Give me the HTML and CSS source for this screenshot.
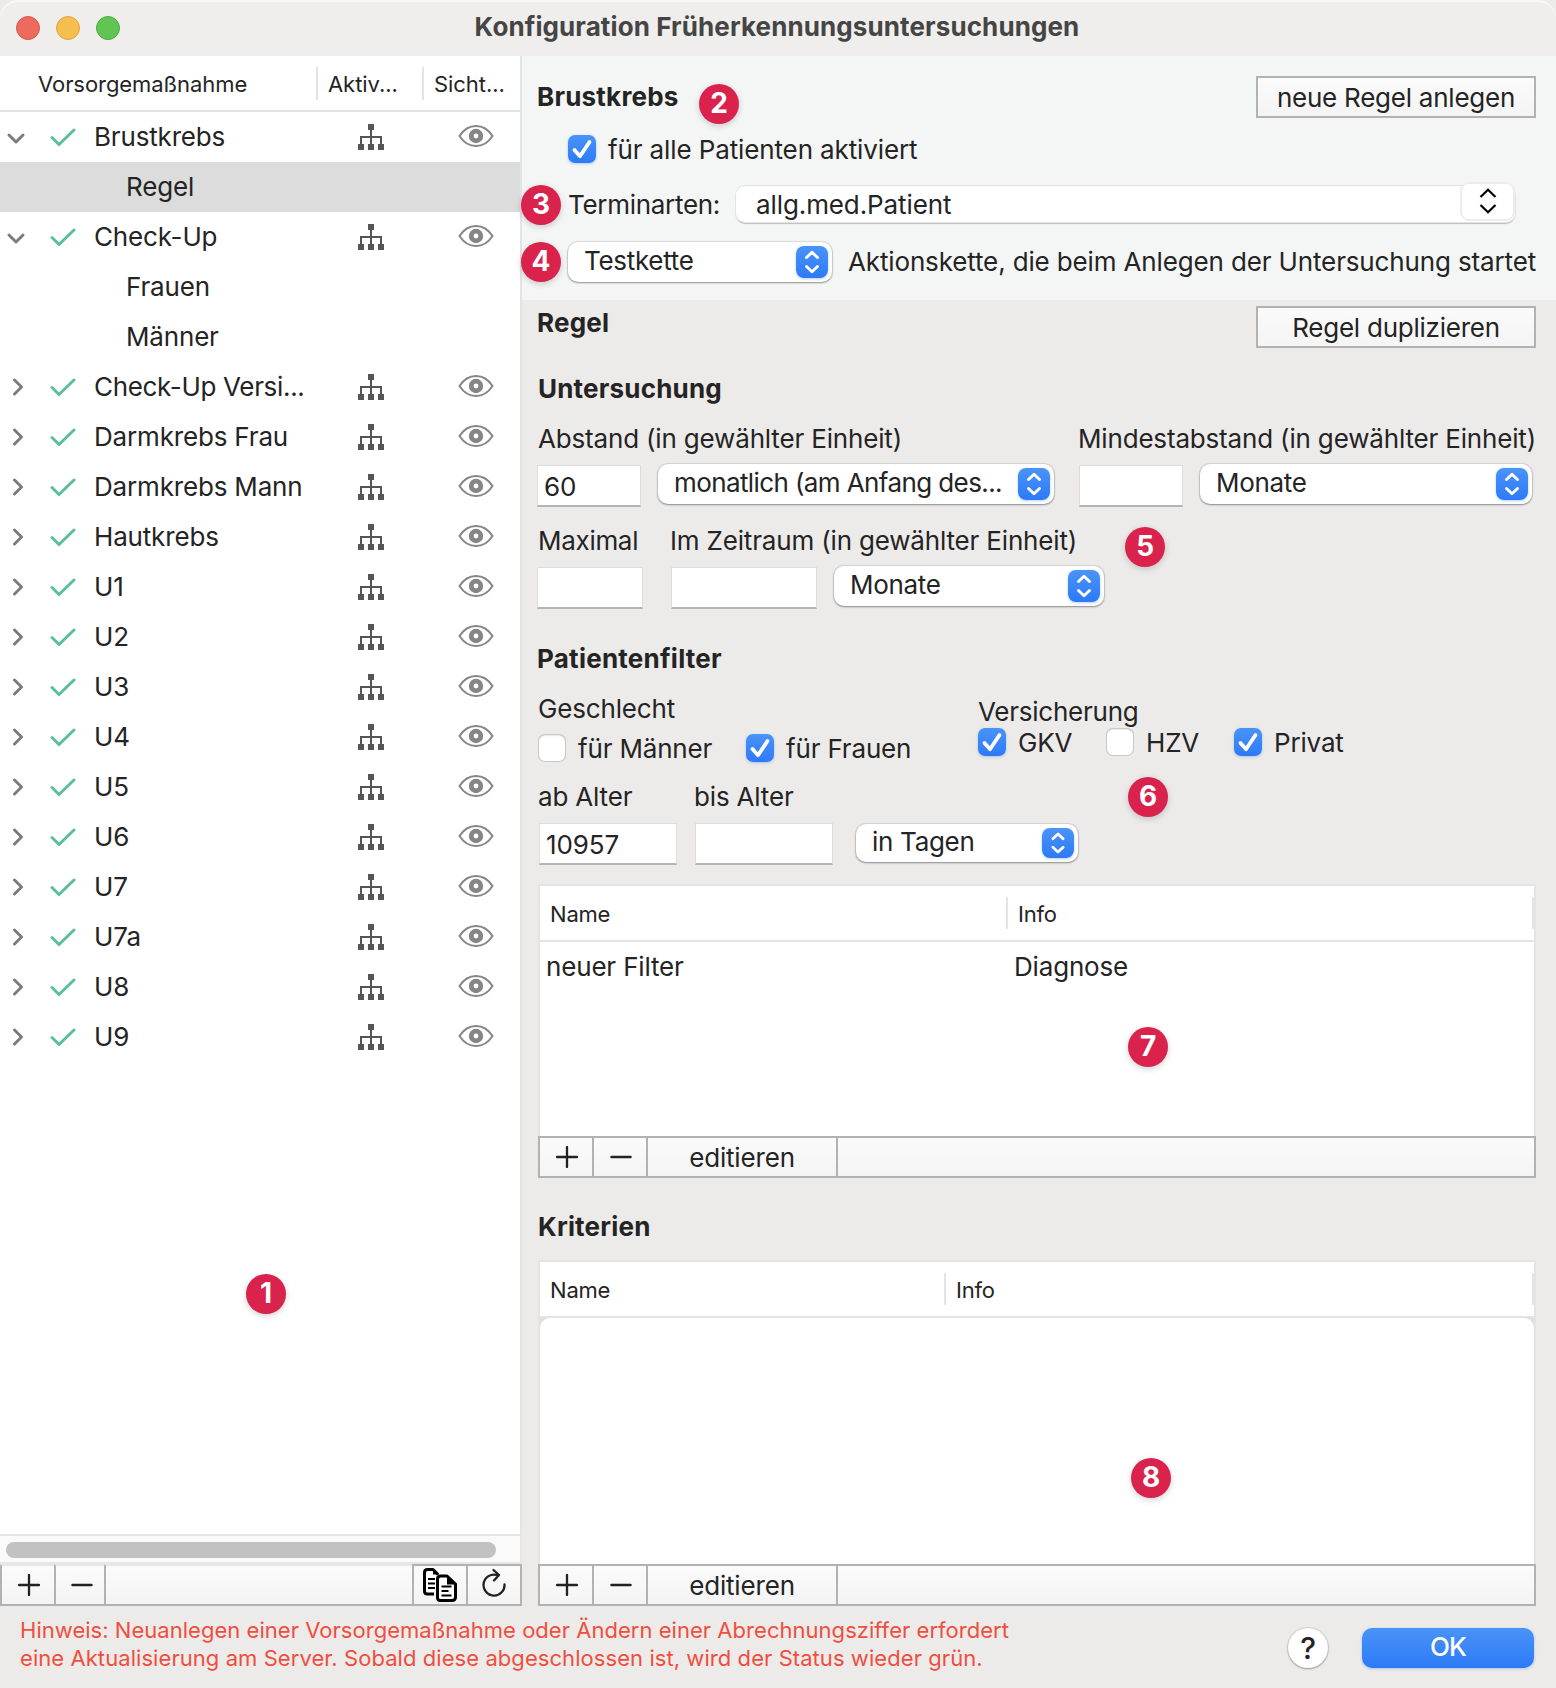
FILE: index.html
```
<!DOCTYPE html>
<html lang="de">
<head>
<meta charset="utf-8">
<title>Konfiguration Früherkennungsuntersuchungen</title>
<link rel="stylesheet" href="styles.css">
</head>
<body>
<svg class="defs" width="0" height="0" aria-hidden="true">
  <symbol id="down" viewBox="0 0 18 12"><path d="M2 2l7 7 7-7" fill="none" stroke="#7b7b7b" stroke-width="2.9" stroke-linecap="round" stroke-linejoin="round"/></symbol>
  <symbol id="right" viewBox="0 0 12 18"><path d="M2.500 2l7 7-7 7" fill="none" stroke="#7b7b7b" stroke-width="2.9" stroke-linecap="round" stroke-linejoin="round"/></symbol>
  <symbol id="tick" viewBox="0 0 26 20"><path d="M2 10.5l7 7L24 3" fill="none" stroke="#5abf9b" stroke-width="3" stroke-linecap="round" stroke-linejoin="miter"/></symbol>
  <symbol id="tree" viewBox="0 0 26 26"><g fill="#555"><path d="M10 0h6v6h-6zM0 20h6v6H0zM10 20h6v6h-6zM20 20h6v6h-6z"/><path d="M12 5h2v15h-2z"/></g><path d="M3 21v-8h20v8" fill="none" stroke="#555" stroke-width="2"/></symbol>
  <symbol id="eye" viewBox="0 0 36 24"><path d="M1.500 12C6 5 12 2 18 2s12 3 16.500 10C30 19 24 22 18 22S6 19 1.500 12z" fill="none" stroke="#868686" stroke-width="2"/><circle cx="18" cy="12" r="4.800" fill="none" stroke="#868686" stroke-width="4.800"/></symbol>
  <symbol id="updown" viewBox="0 0 32 32"><path d="M10.500 11.500L16 6.300l5.500 5.200M10.500 20.500l5.500 5.200 5.500-5.200" fill="none" stroke="#fff" stroke-width="2.900" stroke-linecap="round" stroke-linejoin="round"/></symbol>
  <symbol id="check" viewBox="0 0 28 28"><path d="M6.500 15l5.500 6.200L21.500 7" fill="none" stroke="#fff" stroke-width="3.800" stroke-linecap="round" stroke-linejoin="round"/></symbol>
  <symbol id="plus" viewBox="0 0 22 22"><path d="M1 11h20M11 1v20" fill="none" stroke="#222" stroke-width="2.300" stroke-linecap="round"/></symbol>
  <symbol id="minus" viewBox="0 0 22 22"><path d="M1.500 11h19" fill="none" stroke="#222" stroke-width="2.500" stroke-linecap="round"/></symbol>
</svg>

<header class="titlebar">
  <span class="light red"></span><span class="light yellow"></span><span class="light green"></span>
  <h1 class="title">Konfiguration Früherkennungsuntersuchungen</h1>
</header>

<div class="body">
  <aside class="sidebar">
    <div class="side-head"><span class="c1">Vorsorgemaßnahme</span><span class="c2">Aktiv...</span><span class="c3">Sicht...</span></div>
    <div class="tree">
      <div class="row"><svg class="chev-d"><use href="#down"/></svg><svg class="tick"><use href="#tick"/></svg><span class="name">Brustkrebs</span><svg class="org"><use href="#tree"/></svg><svg class="eye"><use href="#eye"/></svg></div>
      <div class="row child selected">Regel</div>
      <div class="row"><svg class="chev-d"><use href="#down"/></svg><svg class="tick"><use href="#tick"/></svg><span class="name">Check-Up</span><svg class="org"><use href="#tree"/></svg><svg class="eye"><use href="#eye"/></svg></div>
      <div class="row child">Frauen</div>
      <div class="row child">Männer</div>
      <div class="row"><svg class="chev-r"><use href="#right"/></svg><svg class="tick"><use href="#tick"/></svg><span class="name versi">Check-Up Versi...</span><svg class="org"><use href="#tree"/></svg><svg class="eye"><use href="#eye"/></svg></div>
      <div class="row"><svg class="chev-r"><use href="#right"/></svg><svg class="tick"><use href="#tick"/></svg><span class="name">Darmkrebs Frau</span><svg class="org"><use href="#tree"/></svg><svg class="eye"><use href="#eye"/></svg></div>
      <div class="row"><svg class="chev-r"><use href="#right"/></svg><svg class="tick"><use href="#tick"/></svg><span class="name">Darmkrebs Mann</span><svg class="org"><use href="#tree"/></svg><svg class="eye"><use href="#eye"/></svg></div>
      <div class="row"><svg class="chev-r"><use href="#right"/></svg><svg class="tick"><use href="#tick"/></svg><span class="name">Hautkrebs</span><svg class="org"><use href="#tree"/></svg><svg class="eye"><use href="#eye"/></svg></div>
      <div class="row"><svg class="chev-r"><use href="#right"/></svg><svg class="tick"><use href="#tick"/></svg><span class="name">U1</span><svg class="org"><use href="#tree"/></svg><svg class="eye"><use href="#eye"/></svg></div>
      <div class="row"><svg class="chev-r"><use href="#right"/></svg><svg class="tick"><use href="#tick"/></svg><span class="name">U2</span><svg class="org"><use href="#tree"/></svg><svg class="eye"><use href="#eye"/></svg></div>
      <div class="row"><svg class="chev-r"><use href="#right"/></svg><svg class="tick"><use href="#tick"/></svg><span class="name">U3</span><svg class="org"><use href="#tree"/></svg><svg class="eye"><use href="#eye"/></svg></div>
      <div class="row"><svg class="chev-r"><use href="#right"/></svg><svg class="tick"><use href="#tick"/></svg><span class="name">U4</span><svg class="org"><use href="#tree"/></svg><svg class="eye"><use href="#eye"/></svg></div>
      <div class="row"><svg class="chev-r"><use href="#right"/></svg><svg class="tick"><use href="#tick"/></svg><span class="name">U5</span><svg class="org"><use href="#tree"/></svg><svg class="eye"><use href="#eye"/></svg></div>
      <div class="row"><svg class="chev-r"><use href="#right"/></svg><svg class="tick"><use href="#tick"/></svg><span class="name">U6</span><svg class="org"><use href="#tree"/></svg><svg class="eye"><use href="#eye"/></svg></div>
      <div class="row"><svg class="chev-r"><use href="#right"/></svg><svg class="tick"><use href="#tick"/></svg><span class="name">U7</span><svg class="org"><use href="#tree"/></svg><svg class="eye"><use href="#eye"/></svg></div>
      <div class="row"><svg class="chev-r"><use href="#right"/></svg><svg class="tick"><use href="#tick"/></svg><span class="name">U7a</span><svg class="org"><use href="#tree"/></svg><svg class="eye"><use href="#eye"/></svg></div>
      <div class="row"><svg class="chev-r"><use href="#right"/></svg><svg class="tick"><use href="#tick"/></svg><span class="name">U8</span><svg class="org"><use href="#tree"/></svg><svg class="eye"><use href="#eye"/></svg></div>
      <div class="row"><svg class="chev-r"><use href="#right"/></svg><svg class="tick"><use href="#tick"/></svg><span class="name">U9</span><svg class="org"><use href="#tree"/></svg><svg class="eye"><use href="#eye"/></svg></div>
    </div>
    <div class="scroll"><div class="thumb"></div></div>
    <div class="side-tools">
      <div class="tool t-add"><svg class="sym"><use href="#plus"/></svg></div>
      <div class="tool t-rem"><svg class="sym"><use href="#minus"/></svg></div>
      <div class="tool t-gap"></div>
      <div class="tool t-copy"><svg width="34" height="34" viewBox="0 0 34 34"><g fill="#fff" stroke="#000" stroke-width="3" stroke-linejoin="round"><path d="M11 26H4.500Q1.500 26 1.500 23V4.500Q1.500 1.500 4.500 1.500H10l5 5"/><path d="M17.500 8h6.500l8.500 8v13q0 3.500-3.500 3.500H17.500Q14.500 32.500 14.500 29.500V11Q14.500 8 17.500 8z"/></g><path d="M10 1l6.500 5.500H10zM24 8v8.500h8.500z"/><path d="M5 11h7M5 15.500h7M5 20h7M18.500 18.500h10M18.500 23h7M18.500 27.500h10" fill="none" stroke="#000" stroke-width="2.200"/></svg></div>
      <div class="tool t-reload"><svg width="24" height="30" viewBox="0 0 24 30"><path d="M22.500 16.500A10.500 10.500 0 1 1 15 7M11.500 2l5.500 5-5 5.500" fill="none" stroke="#222" stroke-width="2.300" stroke-linecap="round" stroke-linejoin="round"/></svg></div>
    </div>
  </aside>

  <main class="main">
    <section class="top">
      <div class="line head-line"><h2>Brustkrebs</h2><button class="btn">neue Regel anlegen</button></div>
      <label class="opt all"><span class="box on"><svg><use href="#check"/></svg></span><span class="txt">für alle Patienten aktiviert</span></label>
      <div class="line termin"><span class="t">Terminarten:</span><div class="combo"><span class="val">allg.med.Patient</span><span class="stepper"><svg width="18" height="26" viewBox="0 0 18 26"><path d="M1.500 9L9 1.800 16.500 9M1.500 17L9 24.200 16.500 17" fill="none" stroke="#000" stroke-width="2.200"/></svg></span></div></div>
      <div class="line kette"><div class="popup p-kette"><span>Testkette</span><svg class="arrows"><use href="#updown"/></svg></div><span class="long">Aktionskette, die beim Anlegen der Untersuchung startet</span></div>
    </section>

    <section class="rule">
      <div class="line rule-head"><h2>Regel</h2><button class="btn">Regel duplizieren</button></div>
      <h2 class="h-unt">Untersuchung</h2>
      <div class="line lab1"><span>Abstand (in gewählter Einheit)</span><span class="m">Mindestabstand (in gewählter Einheit)</span></div>
      <div class="line f1"><div class="input i60">60</div><div class="popup p-mon"><span class="tight">monatlich (am Anfang des...</span><svg class="arrows"><use href="#updown"/></svg></div><div class="input imin"></div><div class="popup p-m1"><span>Monate</span><svg class="arrows"><use href="#updown"/></svg></div></div>
      <div class="line lab2"><span class="mx">Maximal</span><span>Im Zeitraum (in gewählter Einheit)</span></div>
      <div class="line f2"><div class="input imax"></div><div class="input izr"></div><div class="popup p-m2"><span>Monate</span><svg class="arrows"><use href="#updown"/></svg></div></div>

      <h2 class="h-pat">Patientenfilter</h2>
      <div class="filters">
        <div class="sex">
          <div class="t">Geschlecht</div>
          <div class="line opts"><label class="opt o1"><span class="box"></span><span class="txt">für Männer</span></label><label class="opt"><span class="box on"><svg><use href="#check"/></svg></span><span class="txt">für Frauen</span></label></div>
        </div>
        <div class="ins">
          <div class="t">Versicherung</div>
          <div class="line opts"><label class="opt o2"><span class="box on"><svg><use href="#check"/></svg></span><span class="txt">GKV</span></label><label class="opt o2"><span class="box"></span><span class="txt">HZV</span></label><label class="opt"><span class="box on"><svg><use href="#check"/></svg></span><span class="txt">Privat</span></label></div>
        </div>
      </div>
      <div class="line lab3"><span class="ab">ab Alter</span><span>bis Alter</span></div>
      <div class="line f3"><div class="input age">10957</div><div class="input age"></div><div class="popup p-tag"><span>in Tagen</span><svg class="arrows"><use href="#updown"/></svg></div></div>

      <div class="table t1">
        <div class="thead"><span class="th">Name</span><span class="th last">Info</span></div>
        <div class="tbody"><div class="tr"><span class="td">neuer Filter</span><span>Diagnose</span></div></div>
      </div>
      <div class="tools"><div class="tool a"><svg class="sym"><use href="#plus"/></svg></div><div class="tool b"><svg class="sym"><use href="#minus"/></svg></div><div class="tool e">editieren</div></div>

      <h2 class="h-kri">Kriterien</h2>
      <div class="table t2">
        <div class="thead"><span class="th">Name</span><span class="th last">Info</span></div>
        <div class="tbody"></div>
      </div>
      <div class="tools"><div class="tool a"><svg class="sym"><use href="#plus"/></svg></div><div class="tool b"><svg class="sym"><use href="#minus"/></svg></div><div class="tool e">editieren</div></div>
    </section>
  </main>
</div>

<footer class="footer">
  <p class="hint"><span class="l1">Hinweis: Neuanlegen einer Vorsorgemaßnahme oder Ändern einer Abrechnungsziffer erfordert</span><br><span class="l2">eine Aktualisierung am Server. Sobald diese abgeschlossen ist, wird der Status wieder grün.</span></p>
  <button class="help">?</button>
  <button class="ok">OK</button>
</footer>

<span class="badge b1">1</span><span class="badge b2">2</span><span class="badge b3">3</span><span class="badge b4">4</span>
<span class="badge b5">5</span><span class="badge b6">6</span><span class="badge b7">7</span><span class="badge b8">8</span>
</body>
</html>
```
FILE: styles.css
```
* { box-sizing: border-box; }
body {
  margin: 0; width: 1556px; height: 1688px; position: relative; overflow: hidden;
  display: flex; flex-direction: column;
  background: #ecebe9; color: #242424;
  font: 26px/40px Inter, "Liberation Sans", sans-serif;
  letter-spacing: -0.17px;
  white-space: nowrap;
}
h1, h2, p { margin: 0; font-size: 26px; }
h2 { font-weight: 700; line-height: 42px; height: 40px; letter-spacing: 0.2px; }
button { font: inherit; color: inherit; padding: 0; letter-spacing: -0.24px; }
svg { display: block; flex: none; }
.defs { position: absolute; }
.line { display: flex; }

.titlebar { height: 56px; flex: none; background: #f0eeec; display: flex; align-items: center; padding-left: 16px; gap: 16px; border-radius: 18px 18px 0 0; box-shadow: inset 0 2px #f8f7f6; }
.light { width: 24px; height: 24px; border-radius: 50%; border: 1px solid; }
.red { background: #ed6a5e; border-color: #d65b50; }
.yellow { background: #f5bf4f; border-color: #dba73e; }
.green { background: #61c554; border-color: #50a844; }
.title { flex: 1; padding: 0 138px 2px 0; text-align: center; color: #454545; letter-spacing: 0.1px; }

.body { display: flex; height: 1550px; flex: none; }
.sidebar { width: 522px; flex: none; background: #fff; display: flex; flex-direction: column; }
.side-head { height: 56px; border-bottom: 2px solid #e4e4e4; border-right: 2px solid #e4e4e4; display: flex; align-items: center; font-size: 22px; line-height: 32px; letter-spacing: -0.06px; }
.side-head span { padding-top: 1px; }
.c1 { width: 316px; padding-left: 38px; }
.c2 { width: 106px; padding-left: 10px; border-left: 2px solid #e4e4e4; }
.c3 { padding-left: 10px; border-left: 2px solid #e4e4e4; }
.tree { flex: 1; border-right: 2px solid #e4e4e4; }
.row { height: 50px; display: flex; align-items: center; line-height: 46px; }
.child { padding-left: 126px; }
.selected { background: #dcdcdc; }
.chev-d { width: 18px; height: 12px; margin: 3px 25px 0 7px; }
.chev-r { width: 12px; height: 18px; margin: 0 26px 0 12px; }
.tick { width: 26px; height: 20px; margin-right: 18px; }
.name { width: 264px; }
.versi { letter-spacing: -0.33px; }
.org { width: 26px; height: 26px; margin-right: 74px; }
.eye { width: 36px; height: 24px; margin-top: -2px; }
.scroll { height: 30px; border: solid #e6e6e6; border-width: 2px 2px 2px 0; background: #fafafa; padding: 6px; }
.thumb { width: 490px; height: 16px; border-radius: 8px; background: #c2c2c2; }
.side-tools { height: 42px; display: flex; }
.tool { display: flex; align-items: center; justify-content: center; border: 2px solid #b2b2b3; background: linear-gradient(#fbfbfb, #f4f4f4); }
.sym { width: 22px; height: 22px; margin: -1px 0 0 1px; }
.side-tools .tool { border-right-width: 0; }
.side-tools .t-add, .side-tools .t-rem, .side-tools .t-gap { border-top-color: #e6e6e6; }
.t-add { width: 54px; }
.t-rem { width: 50px; padding-left: 3px; }
.t-gap { flex: 1; }
.t-copy { width: 54px; }
.side-tools .t-reload { width: 56px; border-right-width: 2px; }
.t-reload svg { margin-top: -4px; }

.main { flex: 1; min-width: 0; display: flex; flex-direction: column; }
.top { height: 244px; background: #f4f6f5; padding: 20px 20px 0 15px; }
.head-line, .rule-head { justify-content: space-between; height: 42px; }
.btn { width: 280px; height: 42px; border: 2px solid #b2b2b3; background: linear-gradient(#fbfbfb, #f4f4f4); text-align: center; line-height: 39px; }
.opt { display: flex; align-items: center; height: 28px; line-height: 28px; }
.txt { padding-top: 2px; }
.box { width: 28px; height: 28px; border-radius: 7px; background: #fff; box-shadow: inset 0 0 0 1px #c9c9c9, inset 0 1px 2px #bbb; margin-right: 12px; }
.box.on { background: linear-gradient(#4a93f8, #2d7af6); box-shadow: 0 1px 3px rgba(45,122,246,.35); }
.box svg { width: 28px; height: 28px; }
.all { margin: 17px 0 0 31px; letter-spacing: -0.12px; }
.termin { margin: 19px 0 0 31px; height: 40px; }
.termin .t { width: 168px; line-height: 46px; letter-spacing: -0.3px; }
.combo { width: 779px; height: 36px; margin-top: 4px; background: #fff; border-radius: 9px; box-shadow: 0 0 0 1px #e2e4e3, 0 2px 1px #bcbdbd; display: flex; justify-content: space-between; line-height: 38px; padding-left: 20px; letter-spacing: -0.1px; }
.stepper { width: 55px; height: 39px; margin-top: -4px; background: #fff; border: 2px solid #ededed; border-radius: 9px; display: flex; align-items: center; justify-content: center; padding-bottom: 1px; }
.kette { margin: 20px 0 0 31px; }
.long { line-height: 39px; letter-spacing: -0.14px; }
.popup { height: 40px; flex: none; background: #fff; border-radius: 10px; box-shadow: 0 0 1px 1px rgba(0,0,0,.1), 0 1px 2px rgba(0,0,0,.35); display: flex; justify-content: space-between; align-items: center; padding: 0 4px 0 16px; line-height: 36px; letter-spacing: -0.3px; }
.popup > span { margin-top: -3px; }
.popup .tight { letter-spacing: -0.6px; }
.arrows { width: 32px; height: 32px; border-radius: 8px; background: linear-gradient(#4a93f8, #2d7af6); box-shadow: 0 1px 3px rgba(45,122,246,.35); }
.p-kette { width: 264px; margin-right: 16px; }

.rule { padding: 6px 20px 0 15px; }
.rule-head h2 { margin-top: -4px; }
.h-unt { margin: 20px 0 0 1px; }
.lab1 { margin-top: 11px; padding-left: 1px; }
.lab1 .m { margin-left: auto; }
.f1 { margin-top: 5px; height: 44px; }
.input { height: 42px; background: #fff; border: 1px solid #dcdcdc; border-bottom: 2px solid #b5b5b5; padding-left: 6px; line-height: 42px; letter-spacing: -0.1px; }
.f1 .input, .f2 .input { margin-top: 1px; }
.i60, .imin { width: 104px; margin-right: 17px; }
.p-mon { width: 396px; margin-right: 25px; }
.p-m1 { width: 332px; }
.lab2 { margin-top: 13px; padding-left: 1px; }
.mx { width: 132px; letter-spacing: -0.3px; }
.f2 { margin-top: 5px; height: 44px; }
.imax { width: 106px; margin-right: 28px; }
.izr { width: 146px; margin-right: 17px; }
.p-m2 { width: 270px; }
.h-pat { margin-top: 28px; letter-spacing: 0.25px; }
.filters { display: flex; height: 100px; }
.sex { width: 441px; padding: 11px 0 0 1px; }
.ins { padding-top: 14px; }
.sex .opts { margin-top: 5px; }
.ins .opts { margin-top: -4px; }
.ins .t { letter-spacing: -0.25px; }
.o1 { width: 208px; }
.o2 { width: 128px; }
.lab3 { margin-top: -1px; padding-left: 1px; }
.ab { width: 156px; }
.f3 { padding-left: 2px; margin-top: 6px; height: 42px; }
.age { width: 138px; margin-right: 18px; }
.p-tag { width: 222px; height: 38px; margin: 1px 0 0 5px; }
.p-tag .arrows { height: 30px; }
.table { margin-left: 1px; border: 2px solid #e4e4e4; border-bottom: 0; background: #fff; }
.t1 { margin-top: 19px; height: 252px; }
.thead { height: 56px; border-bottom: 2px solid #e4e4e4; display: flex; align-items: center; font-size: 22px; line-height: 30px; letter-spacing: -0.2px; }
.th { padding: 2px 0 0 10px; }
.last { flex: 1; border: solid #e4e4e4; border-width: 0 2px; }
.t1 .th:first-child { width: 466px; }
.t2 .th:first-child { width: 404px; }
.tr { display: flex; padding: 5px 0 0 6px; }
.td { width: 468px; }
.tools { margin-left: 1px; height: 42px; border: 2px solid #b2b2b3; background: linear-gradient(#fbfbfb, #f4f4f4); display: flex; }
.tools .tool { border-width: 0 2px 0 0; background: none; }
.a, .b { width: 54px; }
.e { width: 190px; padding-top: 2px; }
.h-kri { margin: 28px 0 0 1px; }
.t2 { margin-top: 14px; height: 304px; background: #e0e0e0; }
.t2 .thead { background: #fff; }
.t2 .tbody { height: 246px; background: #fff; border-radius: 10px 10px 0 0; }

.footer { display: flex; flex: 1; padding: 18px 22px 0 20px; }
.hint { font-size: 22px; line-height: 28px; color: #f04e3e; flex: 1; margin-top: -8px; letter-spacing: 0.03px; }
.l2 { letter-spacing: 0.065px; }
.help { width: 40px; height: 40px; border: 0; border-radius: 50%; background: #fff; box-shadow: 0 0 1px 1px rgba(0,0,0,.1), 0 1px 2px rgba(0,0,0,.3); font-size: 30px; font-weight: 500; margin: 4px 34px 0 0; line-height: 40px; }
.ok { width: 172px; height: 40px; border: 0; border-radius: 10px; margin-top: 4px; color: #fff; background: linear-gradient(#4a93f8, #2d7af6); box-shadow: 0 1px 3px rgba(45,122,246,.35); line-height: 36px; padding-bottom: 2px; font-weight: 500; letter-spacing: -0.9px; }

.badge { position: absolute; width: 40px; height: 40px; border-radius: 50%; background: #d9234c; color: #fff; font-weight: 700; font-size: 28px; line-height: 39px; text-align: center; box-shadow: 0 2px 6px rgba(0,0,0,.18); }
.b1 { left: 246px; top: 1274px; }
.b2 { left: 699px; top: 84px; }
.b3 { left: 521px; top: 185px; }
.b4 { left: 521px; top: 242px; }
.b5 { left: 1125px; top: 527px; }
.b6 { left: 1128px; top: 777px; }
.b7 { left: 1128px; top: 1027px; }
.b8 { left: 1131px; top: 1458px; }
```
